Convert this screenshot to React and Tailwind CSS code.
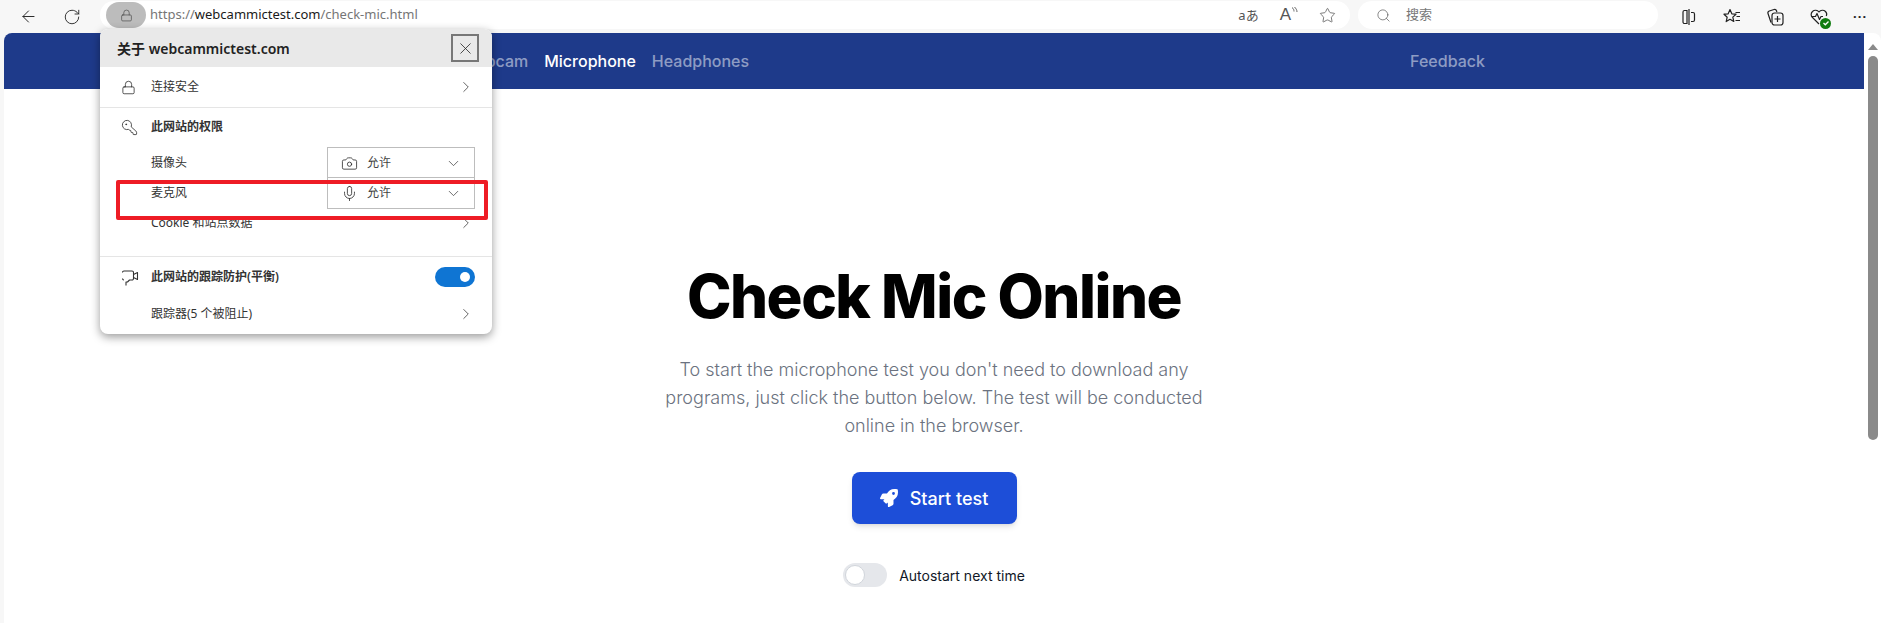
import { ArrowLeft, RotateCw, Lock, ChevronRight, ChevronDown, KeyRound, Camera, Mic, X, Search, Star } from 'lucide-react';
import { FaRocket } from 'react-icons/fa';

const uiFont = "font-['Noto_Sans','Noto_Sans_CJK_SC',sans-serif]";

function SplitIcon() {
  return (
    <svg width="18" height="18" viewBox="0 0 18 18" fill="none" stroke="#222" strokeWidth="1.2">
      <path d="M7 2.5H4.5a1.5 1.5 0 0 0-1.500 1.500v10a1.500 1.500 0 0 0 1.500 1.500H7z" />
      <path d="M11 4.500h2a1.500 1.500 0 0 1 1.500 1.500v6a1.500 1.500 0 0 1-1.500 1.500h-2" />
      <path d="M9 1v16" />
    </svg>
  );
}

function FavoritesIcon() {
  return (
    <svg width="20" height="20" viewBox="0 0 20 20" fill="none" stroke="#222" strokeWidth="1.2" strokeLinejoin="round">
      <path d="M8 2.500l1.800 4.300 4.200.4-3.200 2.900 1 4.400L8 12.300l-3.800 2.300 1-4.400L2 7.200l4.200-.4z" />
      <path d="M13.500 5.500H18M14.500 9.500H18M13.500 13.500H18" />
    </svg>
  );
}

function CollectionsIcon() {
  return (
    <svg width="20" height="20" viewBox="0 0 20 20" fill="none" stroke="#222" strokeWidth="1.2">
      <path d="M6 15.500L3 6.500a2 2 0 0 1 1.300-2.500L9 2.500a2 2 0 0 1 2.500 1.300l.4 1.200" />
      <rect x="7" y="6" width="11" height="12" rx="2.500" />
      <path d="M12.500 9v6M9.500 12h6" />
    </svg>
  );
}

function HealthIcon() {
  return (
    <div className="relative w-[20px] h-[20px]">
      <svg width="20" height="20" viewBox="0 0 20 20" fill="none" stroke="#222" strokeWidth="1.2" strokeLinejoin="round">
        <path d="M10 17L3.500 10.500a4 4 0 0 1 0-6 4.300 4.300 0 0 1 6.500.5 4.300 4.300 0 0 1 6.500-.5 4 4 0 0 1 .8 4.500" />
        <path d="M2.500 9.500h4l1.500-3 2.500 6 1.500-3h2" />
      </svg>
      <div className="absolute right-[-2px] bottom-[-2px] w-[11px] h-[11px] rounded-full bg-[#107c10] flex items-center justify-center">
        <svg width="8" height="8" viewBox="0 0 8 8" fill="none" stroke="#fff" strokeWidth="1.300">
          <path d="M1.500 4l1.800 1.800L6.500 2.500" />
        </svg>
      </div>
    </div>
  );
}

function ReadAloudIcon() {
  return (
    <div className="flex items-start text-[#555]">
      <span className="text-[17px] leading-[18px] font-['Liberation_Sans',sans-serif]">A</span>
      <svg width="7" height="11" viewBox="0 0 7 11" fill="none" stroke="#555" strokeWidth="0.900">
        <path d="M1 1.500c1.500 1 2 2.500 2 4M3.500 1c1.500 1.500 2.500 3 2.500 5" />
      </svg>
    </div>
  );
}

function TrackingIcon() {
  return (
    <svg width="18" height="18" viewBox="0 0 18 18" fill="none" stroke="#333" strokeWidth="1.100" strokeLinejoin="round">
      <path d="M1.500 4.500a1.500 1.500 0 0 1 1.500-1.500h8a1.500 1.500 0 0 1 1.500 1.500v6a1.500 1.500 0 0 1-1.500 1.500H8.500l-2 2H5v3.500" />
      <path d="M3 12a1.500 1.500 0 0 1-1.500-1.500" />
      <path d="M12.500 6.500l4-2v7l-4-2" />
    </svg>
  );
}

function Toolbar() {
  return (
    <div className={`h-[33px] bg-[#f7f7f7] flex items-center ${uiFont}`}>
      <div className="w-[100px] flex items-center pl-[19px] gap-[25px]">
        <ArrowLeft size={19} strokeWidth={1.2} color="#222" />
        <RotateCw size={18} strokeWidth={1.2} color="#222" />
      </div>
      <div className="w-[1250px] h-[28px] mt-[-3px] bg-white rounded-r-[14px] rounded-l-[14px] flex items-center pl-[6px]">
        <div className="w-[40px] h-[26px] rounded-[13px] bg-[#bcbcbc] flex items-center justify-center">
          <Lock size={13} strokeWidth={1.2} color="#444" />
        </div>
        <div className="ml-[4px] text-[13px] text-[#767676] whitespace-nowrap">
          https://<span className="text-[#1a1a1a]">webcammictest.com</span>/check-mic.html
        </div>
        <div className="ml-auto flex items-center gap-[21px] pr-[14px]">
          <span className="text-[13px] text-[#555] leading-none">aあ</span>
          <ReadAloudIcon />
          <Star size={17} strokeWidth={1.100} color="#555" />
        </div>
      </div>
      <div className="ml-[8px] w-[300px] h-[28px] mt-[-3px] bg-white rounded-[14px] flex items-center pl-[18px] gap-[15px]">
        <Search size={15} strokeWidth={1.100} color="#555" />
        <span className="text-[13px] text-[#777]">搜索</span>
      </div>
      <div className="flex-1 flex items-center justify-around pl-[10px] pr-[2px]">
        <SplitIcon />
        <FavoritesIcon />
        <CollectionsIcon />
        <HealthIcon />
        <span className="text-[13px] font-bold text-[#222] tracking-[1px] leading-none pb-[6px]">...</span>
      </div>
    </div>
  );
}

function PopupRow({ icon, label, bold, children }) {
  return (
    <div className="flex items-center h-[30px] pl-[21px] pr-[17px]">
      <div className="w-[30px] shrink-0 flex items-center">{icon}</div>
      <span className={`text-[12px] text-[#333] ${bold ? 'font-semibold' : ''}`}>{label}</span>
      <div className="ml-auto flex items-center">{children}</div>
    </div>
  );
}

function PermissionSelect({ icon }) {
  return (
    <div className="w-[148px] h-[32px] border border-[#bdbdbd] flex items-center pl-[13px] pr-[12px] bg-white">
      <div className="w-[26px]">{icon}</div>
      <span className="text-[12px] text-[#444]">允许</span>
      <ChevronDown size={17} strokeWidth={1.100} color="#444" className="ml-auto" />
    </div>
  );
}

function SitePopup() {
  return (
    <div className={`absolute left-[100px] top-[29px] w-[392px] h-[305px] bg-white rounded-[8px] shadow-[0_3px_10px_rgba(0,0,0,0.4)] overflow-hidden ${uiFont}`}>
      <div className="h-[38px] bg-[#e9e9e9] flex items-center pl-[17px] pr-[13px]">
        <span className="text-[14px] font-semibold text-[#222]">关于 webcammictest.com</span>
        <div className="ml-auto w-[28px] h-[28px] border-2 border-[#777] flex items-center justify-center">
          <X size={19} strokeWidth={1} color="#222" />
        </div>
      </div>
      <div className="pt-[5px] h-[41px] border-b border-[#e5e5e5]">
        <PopupRow icon={<Lock size={15} strokeWidth={1.200} color="#222" />} label="连接安全">
          <ChevronRight size={18} strokeWidth={1.100} color="#444" />
        </PopupRow>
      </div>
      <div className="pt-[4px] h-[149px] border-b border-[#e5e5e5]">
        <PopupRow icon={<KeyRound size={17} strokeWidth={1.100} color="#222" className="-scale-x-100" />} label="此网站的权限" bold />
        <div className="h-[6px]" />
        <PopupRow label="摄像头">
          <PermissionSelect icon={<Camera size={17} strokeWidth={1.100} color="#222" />} />
        </PopupRow>
        <PopupRow label="麦克风">
          <PermissionSelect icon={<Mic size={17} strokeWidth={1.100} color="#222" />} />
        </PopupRow>
        <PopupRow label="Cookie 和站点数据">
          <ChevronRight size={18} strokeWidth={1.100} color="#444" />
        </PopupRow>
      </div>
      <div className="pt-[5px]">
        <PopupRow icon={<TrackingIcon />} label="此网站的跟踪防护(平衡)" bold>
          <div className="w-[40px] h-[20px] rounded-full bg-[#0f75d3] flex items-center justify-end pr-[5px]">
            <div className="w-[10px] h-[10px] rounded-full bg-white" />
          </div>
        </PopupRow>
        <div className="h-[7px]" />
        <PopupRow label="跟踪器(5 个被阻止)">
          <ChevronRight size={18} strokeWidth={1.100} color="#444" />
        </PopupRow>
      </div>
      <div className="absolute left-[16px] top-[151px] w-[372px] h-[40px] border-[4px] border-[#ee1c25] rounded-[2px]" />
    </div>
  );
}

function Scrollbar() {
  return (
    <div className="w-[17px] shrink-0 flex flex-col items-center pt-[11px] pl-[1px]">
      <div className="w-0 h-0 border-l-[5px] border-r-[5px] border-b-[6px] border-l-transparent border-r-transparent border-b-[#8a8a8a]" />
      <div className="mt-[6px] w-[10px] h-[384px] rounded-full bg-[#8a8a8a]" />
    </div>
  );
}

export default function App() {
  return (
    <div className="relative h-[623px] overflow-hidden bg-[#f7f7f7] font-['Inter',sans-serif]">
      <Toolbar />
      <div className="ml-[4px] h-[590px] flex bg-white rounded-tl-[8px] rounded-tr-[8px] overflow-hidden">
        <div className="flex-1 min-w-0">
          <nav className="h-[56px] bg-[#1e3a8a] flex items-center text-[16px] font-medium text-white/50">
            <a className="ml-[457px]">Webcam</a>
            <a className="ml-[16px] text-white">Microphone</a>
            <a className="ml-[16px]">Headphones</a>
            <a className="ml-[661px]">Feedback</a>
          </nav>
          <main className="flex flex-col items-center pt-[171px]">
            <h1 className="text-[60px] leading-[72px] font-extrabold tracking-[-0.025em] text-black">Check Mic Online</h1>
            <p className="mt-[24px] w-[540px] text-center text-[18px] leading-[28px] font-light text-[#6b7280]">
              To start the microphone test you don't need to download any programs, just click the button below. The test will be conducted online in the browser.
            </p>
            <button className="mt-[32px] w-[165px] h-[52px] rounded-lg bg-[#1d4ed8] text-white text-[18px] font-medium flex items-center justify-center gap-[12px] shadow-md">
              <FaRocket size={18} />
              Start test
            </button>
            <div className="mt-[39px] flex items-center gap-[12px]">
              <div className="w-[44px] h-[24px] rounded-full bg-[#e5e7eb] flex items-center pl-[2px]">
                <div className="w-[20px] h-[20px] rounded-full bg-white border border-[#d1d5db]" />
              </div>
              <span className="text-[14px] font-normal text-[#111827]">Autostart next time</span>
            </div>
          </main>
        </div>
        <Scrollbar />
      </div>
      <SitePopup />
    </div>
  );
}
